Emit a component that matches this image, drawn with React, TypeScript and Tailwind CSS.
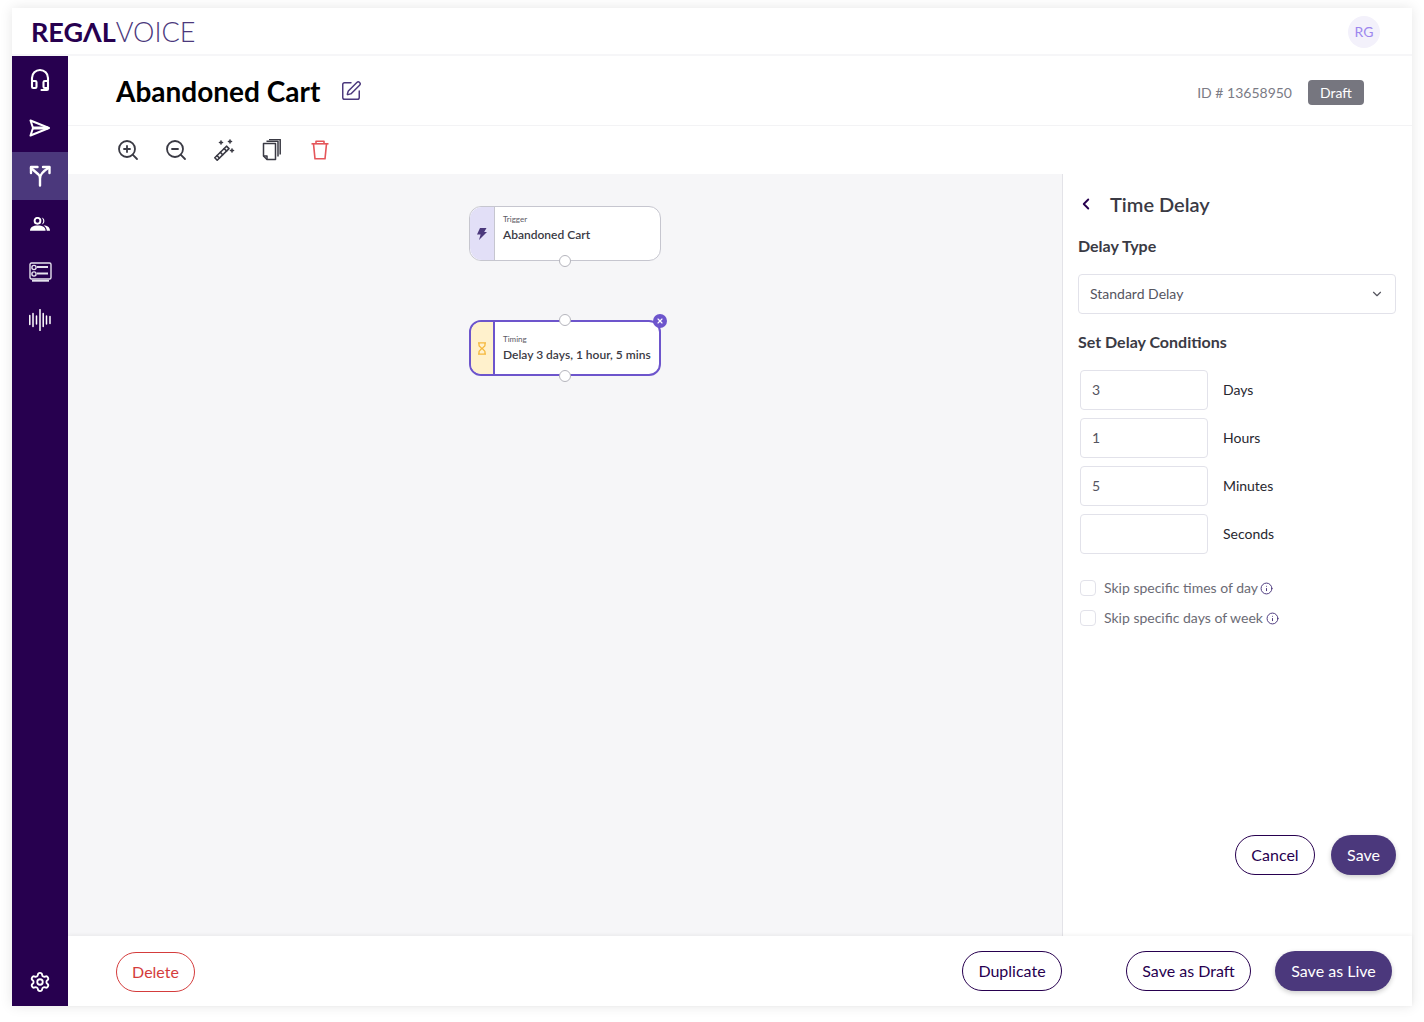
import { ChevronDown, ChevronLeft, Info, Settings, SquarePen, X, ZoomIn, ZoomOut } from "lucide-react";

const Headset = () => (
  <svg width="22" height="24" viewBox="0 0 22 24" fill="none" stroke="white" strokeWidth="2.1" strokeLinecap="round" strokeLinejoin="round">
    <path d="M3 13V10a8 8 0 0 1 16 0v3" />
    <rect x="3" y="13" width="4.5" height="7" rx="1.2" />
    <rect x="14.5" y="13" width="4.5" height="7" rx="1.2" />
    <path d="M19 20v1a1 1 0 0 1-1 1h-5.5" />
  </svg>
);

const Plane = () => (
  <svg width="22" height="18" viewBox="0 0 22 18" fill="none" stroke="white" strokeWidth="2" strokeLinejoin="round">
    <path d="M1.5 1.5 20 9 1.5 16.5 4 9Z" />
    <path d="M4 9h15" strokeWidth="3" />
  </svg>
);

const Split = () => (
  <svg width="24" height="24" viewBox="0 0 24 24" fill="none" stroke="white" strokeWidth="2.4" strokeLinecap="round" strokeLinejoin="round">
    <path d="M3 4l7.5 6.5c1 1 1.5 2 1.5 3.5v7.5" />
    <path d="M12 14c0-3 2-6 9-10.5" />
    <path d="M3 9V3h6.5" />
    <path d="M15 3h6.5v6" />
  </svg>
);

const Users = () => (
  <svg width="20" height="14" viewBox="0 0 20 14" fill="white">
    <circle cx="7.5" cy="3.8" r="2.9" fill="none" stroke="white" strokeWidth="1.9" />
    <path d="M0 13.8c0-3.7 3-5.3 7.8-5.3s7.8 1.6 7.8 5.3Z" />
    <path d="M11.6.4a3.6 3.6 0 0 1 0 7c1.1-1 1.6-2.2 1.6-3.5S12.7 1.5 11.6.4Z" />
    <path d="M13.6 8.2c3.8.2 6.4 1.9 6.4 5.6h-3.2c0-2.2-1.2-4.2-3.2-5.6Z" />
  </svg>
);

const FormList = () => (
  <svg width="23" height="20" viewBox="0 0 23 20" fill="none" stroke="#e6e2ee" strokeWidth="1.4">
    <rect x="1" y="1" width="21" height="16" rx="1.5" />
    <path d="M3 18.8h17" strokeWidth="1.8" />
    <circle cx="5" cy="5.5" r="2.1" />
    <circle cx="5" cy="12" r="2.1" />
    <path d="M8 5h11M8 11.5h11" strokeWidth="2" />
  </svg>
);

const Wave = () => (
  <svg width="22" height="22" viewBox="0 0 22 22" fill="none" stroke="white" strokeWidth="1.5" strokeLinecap="round">
    <path d="M.8 6.5v9M4 4.5v13M7.5 7v8M11 .6v20.8M14.2 4.5v13M17.5 7v8M21 7.5v7" />
  </svg>
);

const Wand = () => (
  <svg width="22" height="22" viewBox="0 0 22 22" fill="none" stroke="#3a3a44" strokeWidth="1.6" strokeLinecap="round" strokeLinejoin="round">
    <path d="M13.5 7.2 16 9.6 4.2 21.2 1.8 18.8Z" />
    <path d="m11.2 9.6 2.4 2.4M4 16.7l2.4 2.3M7.4 13.4l2.3 2.3" />
    <path d="M8 2v3M6.5 3.5h3M17 1v3M15.5 2.5h3M19 10v3M17.5 11.5h3" />
  </svg>
);

const Pages = () => (
  <svg width="20" height="22" viewBox="0 0 20 22" fill="none" stroke="#3a3a44" strokeWidth="1.5" strokeLinejoin="round">
    <path d="M1.5 4.5h12v16H5l-3.5-3.5Z" />
    <path d="M1.5 17H5v3.5" />
    <path d="M4.5 2.2h11.5v15.4" />
    <path d="M7 .6h11.2V15.6" />
  </svg>
);

const TrashCan = () => (
  <svg width="20" height="20" viewBox="0 0 20 20" fill="none" stroke="#e5565a" strokeWidth="1.6" strokeLinejoin="round">
    <path d="M1.5 3.8h17" />
    <path d="M6 3.8V1.2h8v2.6" />
    <path d="M3.5 3.8 5 18.8h10l1.5-15" />
  </svg>
);

const Bolt = () => (
  <svg width="10" height="12" viewBox="0 0 10 12" fill="#4b387c">
    <path d="M3 0h6.5L7.2 4H10L2 12l1.6-5.6H0Z" />
  </svg>
);

const Hourglass = () => (
  <svg width="10" height="13" viewBox="0 0 10 13" fill="none" stroke="#f5b83d" strokeWidth="1.3">
    <path d="M1 .8h8M1 12.2h8M2 .8v2.5c0 1.5 2.5 2 2.5 3.2S2 8.2 2 9.7v2.5M8 .8v2.5c0 1.5-2.5 2-2.5 3.2S8 8.2 8 9.7v2.5" />
  </svg>
);

const sideItems = [
  { icon: <Headset />, active: false },
  { icon: <Plane />, active: false },
  { icon: <Split />, active: true },
  { icon: <Users />, active: false },
  { icon: <FormList />, active: false },
  { icon: <Wave />, active: false },
];

const delayFields = [
  { label: "Days", value: "3" },
  { label: "Hours", value: "1" },
  { label: "Minutes", value: "5" },
  { label: "Seconds", value: "" },
];

const outlineBtn =
  "h-10 rounded-full border border-[#27004f] bg-white text-base text-[#27004f] flex items-center justify-center";
const solidBtn =
  "h-10 rounded-full bg-[#4b387c] text-base text-white flex items-center justify-center shadow-[0_2px_5px_rgba(0,0,0,0.2)]";

export default function App() {
  return (
    <div className="w-[1424px] h-[1022px] bg-white pt-2 pl-3 overflow-hidden font-['Lato','Noto_Sans',sans-serif]">
      <div className="w-[1400px] h-[998px] flex flex-col bg-white shadow-[0_0_12px_rgba(0,0,0,0.1)]">
        {/* Top bar */}
        <header className="h-12 shrink-0 flex items-center justify-between pl-[19px] pr-8 pt-[2px] border-b-2 border-[#f6f6f8]">
          <div className="flex items-baseline -mt-0.5 text-[27px] leading-none text-[#27004f]">
            <span className="font-bold">REGΛL</span>
            <span className="font-light text-[#4b387c]">VOICE</span>
          </div>
          <div className="w-8 h-8 rounded-full bg-[#f3f1fb] text-[#9d87ee] text-sm flex items-center justify-center">
            RG
          </div>
        </header>

        <div className="flex-1 flex min-h-0">
          {/* Sidebar */}
          <nav className="w-14 shrink-0 bg-[#27004f] flex flex-col">
            {sideItems.map((item, i) => (
              <div
                key={i}
                className={`h-12 flex items-center justify-center ${item.active ? "bg-[#4b387c]" : ""}`}
              >
                {item.icon}
              </div>
            ))}
            <div className="mt-auto h-12 flex items-center justify-center">
              <Settings size={22} color="white" strokeWidth={2} />
            </div>
          </nav>

          <div className="flex-1 flex flex-col min-w-0">
            {/* Title */}
            <div className="h-[70px] shrink-0 flex items-center pl-12 pr-12 border-b border-[#f3f3f5]">
              <h1 className="text-[28px] font-bold text-black leading-none">Abandoned Cart</h1>
              <SquarePen size={22} color="#4b387c" strokeWidth={1.6} className="ml-5" />
              <span className="ml-auto mt-1 text-sm text-[#7b7b85]">ID # 13658950</span>
              <span className="ml-4 mt-1 w-14 h-[25px] rounded bg-[#76767f] text-white text-sm flex items-center justify-center">
                Draft
              </span>
            </div>

            {/* Toolbar */}
            <div className="h-12 shrink-0 flex items-center pl-12">
              <div className="w-6 flex justify-center"><ZoomIn size={26} color="#3a3a44" strokeWidth={1.8} /></div>
              <div className="w-6 ml-6 flex justify-center"><ZoomOut size={26} color="#3a3a44" strokeWidth={1.8} /></div>
              <div className="w-6 ml-6 flex justify-center"><Wand /></div>
              <div className="w-6 ml-6 flex justify-center"><Pages /></div>
              <div className="w-6 ml-6 flex justify-center"><TrashCan /></div>
            </div>

            <div className="flex-1 flex min-h-0">
              {/* Canvas */}
              <main className="relative flex-1 bg-[#f6f6f8] border-r border-[#e3e3e8]">
                <div className="absolute left-[401px] top-8 w-[192px] h-[55px] flex rounded-xl border border-[#c6c6cf] bg-white">
                  <div className="w-[25px] shrink-0 rounded-l-xl bg-[#e2dff7] border-r border-[#c6c6cf] flex items-center justify-center pt-[1px]">
                    <Bolt />
                  </div>
                  <div className="pl-2 pt-[7px] text-[#3a3a44]">
                    <div className="text-[8px] leading-[11px] text-[#5a5a64]">Trigger</div>
                    <div className="text-xs leading-4 mt-[2px] font-semibold">Abandoned Cart</div>
                  </div>
                  <span className="absolute left-[89px] -bottom-[7px] w-3 h-3 rounded-full border border-[#b5b5bd] bg-white" />
                </div>

                <div className="absolute left-[401px] top-[146px] w-[192px] h-14 flex rounded-xl border-2 border-[#6d55cc] bg-white">
                  <div className="w-6 shrink-0 rounded-l-[10px] bg-[#fff1cc] border-r-2 border-[#6d55cc] flex items-center justify-center">
                    <Hourglass />
                  </div>
                  <div className="pl-2 pt-3 text-[#3a3a44] whitespace-nowrap">
                    <div className="text-[8px] leading-[11px] text-[#5a5a64]">Timing</div>
                    <div className="text-xs leading-4 mt-[2px] font-semibold">Delay 3 days, 1 hour, 5 mins</div>
                  </div>
                  <span className="absolute left-[88px] -top-[8px] w-3 h-3 rounded-full border border-[#b5b5bd] bg-white" />
                  <span className="absolute left-[88px] -bottom-[8px] w-3 h-3 rounded-full border border-[#b5b5bd] bg-white" />
                  <span className="absolute -right-[8px] -top-[8px] w-3.5 h-3.5 rounded-full bg-[#6d55cc] flex items-center justify-center">
                    <X size={8} color="white" strokeWidth={3.5} />
                  </span>
                </div>
              </main>

              {/* Time Delay panel */}
              <aside className="w-[349px] shrink-0 bg-white pl-[15px] pr-4 flex flex-col text-[#3a3a44]">
                <div className="h-[62px] flex items-center pb-[3px]">
                  <ChevronLeft size={18} color="#27004f" strokeWidth={2.5} className="-ml-[1px]" />
                  <h2 className="ml-[15px] text-xl font-semibold leading-none">Time Delay</h2>
                </div>
                <h3 className="text-base font-bold leading-5">Delay Type</h3>
                <div className="mt-[18px] h-10 rounded border border-[#e2e2ea] flex items-center justify-between pl-[11px] pr-[11px] text-sm text-[#55555f]">
                  Standard Delay
                  <ChevronDown size={14} color="#55555f" />
                </div>
                <h3 className="text-base font-bold leading-5 mt-[18px]">Set Delay Conditions</h3>
                <div className="mt-[18px] pl-[2px] flex flex-col gap-2">
                  {delayFields.map((f) => (
                    <div key={f.label} className="flex items-center">
                      <div className="w-32 h-10 rounded border border-[#e2e2ea] flex items-center pl-[11px] text-sm text-[#55555f]">
                        {f.value}
                      </div>
                      <span className="ml-[15px] text-sm text-[#27272f]">{f.label}</span>
                    </div>
                  ))}
                </div>
                <div className="mt-[26px] pl-[2px] flex flex-col gap-3.5 text-sm text-[#6b6b75]">
                  <label className="flex items-center h-4">
                    <span className="w-4 h-4 rounded-sm border border-[#e2e2ea]" />
                    <span className="ml-2">Skip specific times of day</span>
                    <Info size={13} color="#4b387c" strokeWidth={1.8} className="ml-[2px] mt-[1px]" />
                  </label>
                  <label className="flex items-center h-4">
                    <span className="w-4 h-4 rounded-sm border border-[#e2e2ea]" />
                    <span className="ml-2">Skip specific days of week</span>
                    <Info size={13} color="#4b387c" strokeWidth={1.8} className="ml-[3px] mt-[1px]" />
                  </label>
                </div>
                <div className="mt-[209px] flex justify-end gap-4">
                  <button className={`${outlineBtn} w-20`}>Cancel</button>
                  <button className={`${solidBtn} w-[65px]`}>Save</button>
                </div>
              </aside>
            </div>

            {/* Footer */}
            <footer className="relative h-[70px] shrink-0 bg-white flex items-center pl-12 pr-5 shadow-[0_-1px_4px_rgba(0,0,0,0.06)]">
              <button className="h-10 w-[79px] mt-0.5 rounded-full border border-[#d43c3c] text-base text-[#d43c3c] flex items-center justify-center">
                Delete
              </button>
              <button className={`${outlineBtn} w-[100px] ml-auto`}>Duplicate</button>
              <button className={`${outlineBtn} w-[125px] ml-16`}>Save as Draft</button>
              <button className={`${solidBtn} w-[117px] ml-6`}>Save as Live</button>
            </footer>
          </div>
        </div>
      </div>
    </div>
  );
}
